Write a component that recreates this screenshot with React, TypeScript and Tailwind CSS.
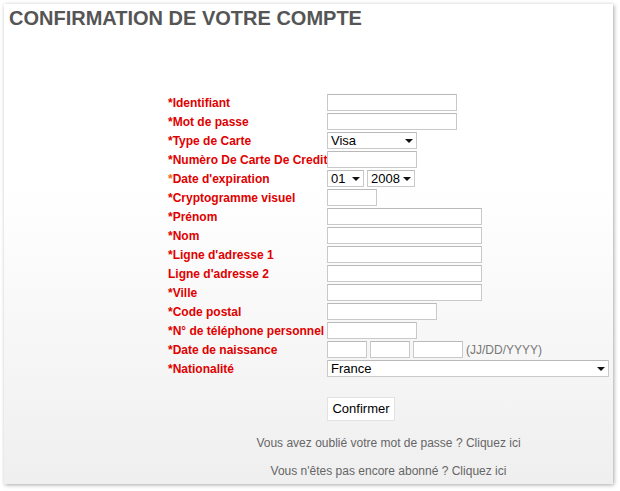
import { type ReactNode } from 'react';

const font = { fontFamily: '"Liberation Sans", Arial, sans-serif' };

function TextBox({ w }: { w: string }) {
  return (
    <input
      type="text"
      className={`${w} h-[17px] border border-[#c9c9c9] border-t-[#b9b9b9] bg-white px-[2px] text-[13px] text-black outline-none`}
    />
  );
}

function Select({ w, value, options }: { w: string; value: string; options: string[] }) {
  return (
    <div className={`relative ${w} h-[17px]`}>
      <select
        defaultValue={value}
        className="block h-full w-full appearance-none border border-[#c9c9c9] border-t-[#b9b9b9] bg-white pl-[3px] text-[13px] leading-[15px] text-black outline-none"
      >
        {options.map((o) => (
          <option key={o}>{o}</option>
        ))}
      </select>
      <svg
        className="pointer-events-none absolute right-[4px] top-[7px]"
        width="8"
        height="4"
        viewBox="0 0 8 4"
      >
        <path d="M0 0h8L4 4z" fill="#111" />
      </svg>
    </div>
  );
}

function Row({ label, req = true, star, children }: { label: string; req?: boolean; star?: string; children: ReactNode }) {
  return (
    <div className="flex h-[19px] items-center">
      <div className="w-[159px] shrink-0 whitespace-nowrap text-[12px] font-bold text-[#e00000]">
        {req && <span className={star ?? ''}>*</span>}
        {label}
      </div>
      <div className="flex items-center gap-[3px]">{children}</div>
    </div>
  );
}

export default function App() {
  return (
    <div className="min-h-[491px] w-[620px] bg-white pl-[4px] pt-[4px]" style={font}>
      <div className="h-[480px] w-[609px] bg-[linear-gradient(to_bottom,#ffffff_0%,#ffffff_38%,#efefef_100%)] shadow-[1px_1px_4px_rgba(0,0,0,0.35)]">
        <h1 className="pl-[5px] pt-[3px] text-[20px] font-bold leading-[23px] text-[#555]">
          CONFIRMATION DE VOTRE COMPTE
        </h1>

        <div className="ml-[164px] mt-[63px] w-[441px]">
          <Row label="Identifiant">
            <TextBox w="w-[130px]" />
          </Row>
          <Row label="Mot de passe">
            <TextBox w="w-[130px]" />
          </Row>
          <Row label="Type de Carte">
            <Select w="w-[90px]" value="Visa" options={['Visa', 'MasterCard', 'American Express']} />
          </Row>
          <Row label="Numèro De Carte De Credit">
            <TextBox w="w-[90px]" />
          </Row>
          <Row label="Date d'expiration" star="text-[#f26a1b]">
            <Select w="w-[37px]" value="01" options={['01', '02', '03', '04', '05', '06', '07', '08', '09', '10', '11', '12']} />
            <Select w="w-[48px]" value="2008" options={['2008', '2009', '2010', '2011', '2012']} />
          </Row>
          <Row label="Cryptogramme visuel">
            <TextBox w="w-[50px]" />
          </Row>
          <Row label="Prénom">
            <TextBox w="w-[155px]" />
          </Row>
          <Row label="Nom">
            <TextBox w="w-[155px]" />
          </Row>
          <Row label="Ligne d'adresse 1">
            <TextBox w="w-[155px]" />
          </Row>
          <Row label="Ligne d'adresse 2" req={false}>
            <TextBox w="w-[155px]" />
          </Row>
          <Row label="Ville">
            <TextBox w="w-[155px]" />
          </Row>
          <Row label="Code postal">
            <TextBox w="w-[110px]" />
          </Row>
          <Row label="N° de téléphone personnel">
            <TextBox w="w-[90px]" />
          </Row>
          <Row label="Date de naissance">
            <TextBox w="w-[40px]" />
            <TextBox w="w-[40px]" />
            <TextBox w="w-[50px]" />
            <span className="text-[12px] text-[#777]">(JJ/DD/YYYY)</span>
          </Row>
          <Row label="Nationalité">
            <Select w="w-[282px]" value="France" options={['France', 'Belgique', 'Suisse', 'Canada']} />
          </Row>

          <div className="mt-[18px] pl-[159px]">
            <button className="h-[24px] w-[68px] border border-[#e2e2e2] bg-white text-[13px] text-black">
              Confirmer
            </button>
          </div>

          <p className="mt-[15px] text-center text-[12px] leading-[14px] text-[#666]">
            Vous avez oublié votre mot de passe ? <a className="text-[#666]">Cliquez ici</a>
          </p>
          <p className="mt-[14px] text-center text-[12px] leading-[14px] text-[#666]">
            Vous n'êtes pas encore abonné ? <a className="text-[#666]">Cliquez ici</a>
          </p>
        </div>
      </div>
    </div>
  );
}
